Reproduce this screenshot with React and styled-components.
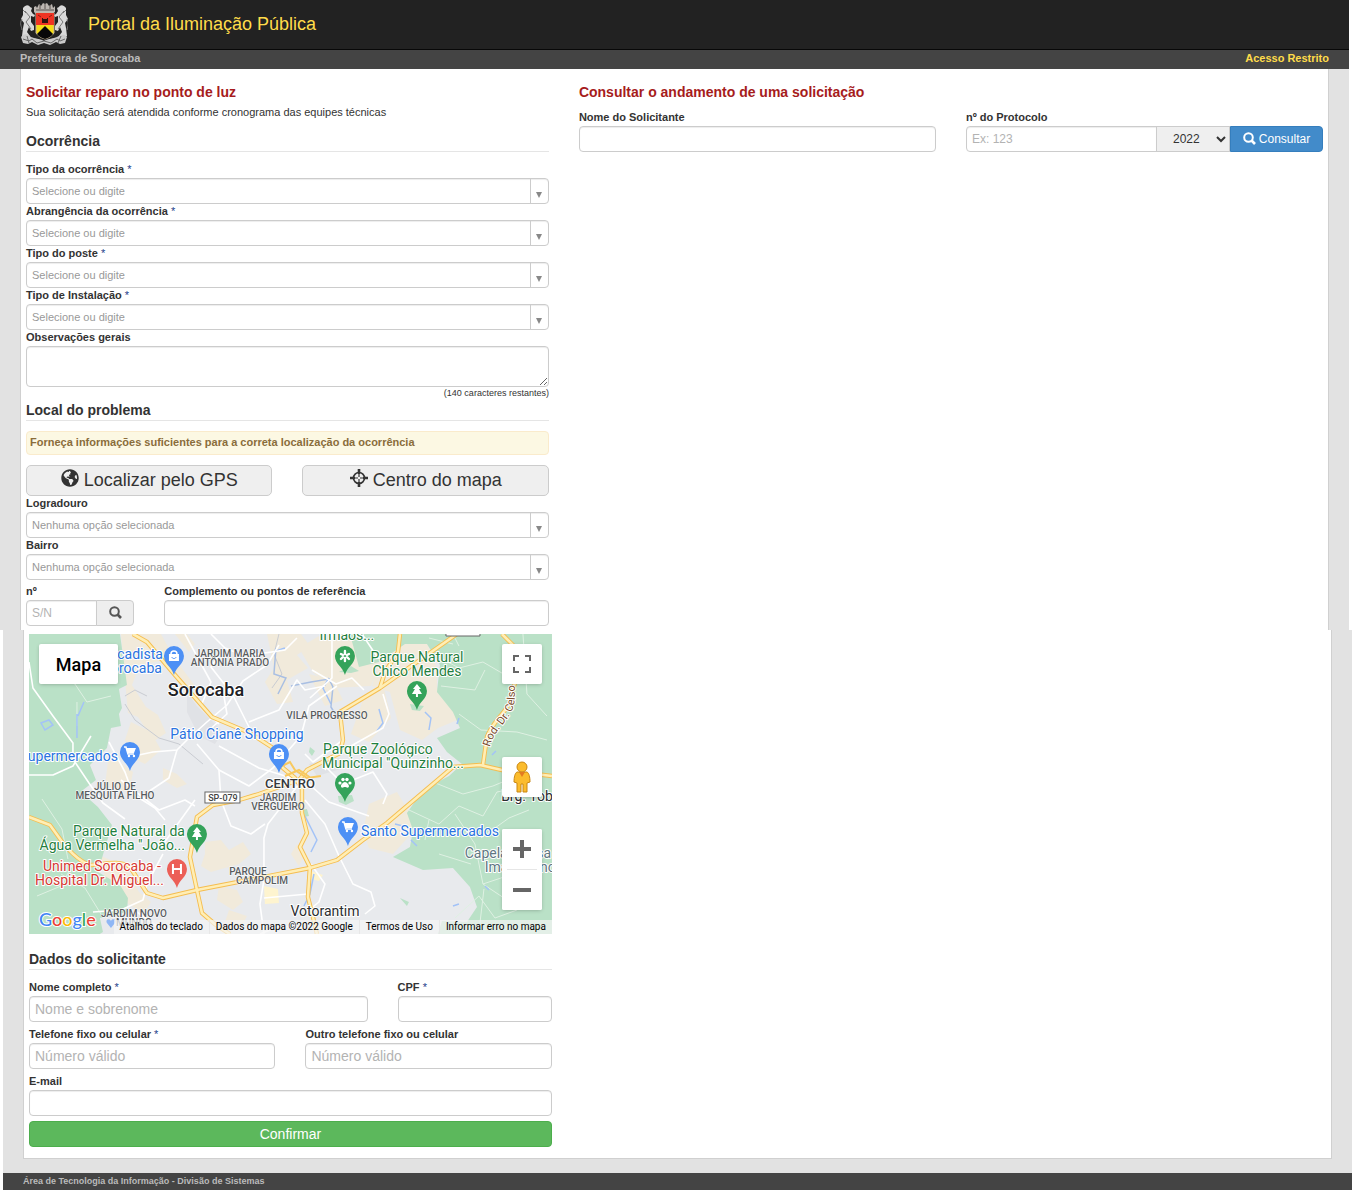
import { useState } from "react";
import styled, { createGlobalStyle } from "styled-components";
import { FaGlobeAmericas } from "react-icons/fa";

const GlobalStyle = createGlobalStyle`
  * {
    box-sizing: border-box;
  }
  body {
    margin: 0;
    background: #fff;
    color: #333;
    font-family: "Liberation Sans", Arial, sans-serif;
    font-size: 11px;
    line-height: 16px;
  }
  button, input, select, textarea {
    font-family: inherit;
    margin: 0;
  }
`;

const Navbar = styled.header`
  display: flex;
  align-items: center;
  gap: 20px;
  height: 50px;
  margin-right: 5px;
  padding: 0 20px 2px;
  background: #222;
  border-bottom: 1px solid #080808;
`;

const Brand = styled.a`
  color: #ffdc4a;
  font-size: 18px;
  line-height: 20px;
  text-decoration: none;
`;

const SubBar = styled.nav`
  display: flex;
  justify-content: space-between;
  margin-right: 5px;
  padding: 0 20px 3px;
  background: #444;
  color: #bbb;
  font-weight: bold;
  line-height: 16px;
`;

const RestrictedLink = styled.a`
  color: #ffdc4a;
  text-decoration: none;
`;

const Band = styled.div`
  margin: ${(props) => (props.$shifted ? "0 2px 0 3px" : "0 5px 0 0")};
  padding: ${(props) => (props.$shifted ? "0 20px 14px" : "0 20px")};
  background: #e2e2e2;
`;

const Sheet = styled.div`
  display: grid;
  grid-template-columns: repeat(12, minmax(0, 1fr));
  column-gap: 30px;
  padding: ${(props) => (props.$last ? "4px 5px 11px" : "13px 5px 4px")};
  background: #fff;
  border: solid #d0d0d0;
  border-width: ${(props) => (props.$last ? "0 1px 1px" : "0 1px")};
`;

const Column = styled.section`
  grid-column: span ${(props) => props.$span};
  min-width: 0;
`;

const Row = styled.div`
  display: grid;
  grid-template-columns: repeat(12, minmax(0, 1fr));
  column-gap: 30px;
  margin-top: ${(props) => props.$top || 0}px;
`;

const Cell = styled.div`
  grid-column: span ${(props) => props.$span};
  min-width: 0;
`;

const Title = styled.h1`
  margin: 0;
  color: #a61c1c;
  font-size: 14px;
  line-height: 20px;
`;

const Lead = styled.p`
  margin: 0 0 9px;
  line-height: 20px;
`;

const Legend = styled.h2`
  margin: ${(props) => props.$top || 0}px 0 10px;
  border-bottom: 1px solid #e5e5e5;
  font-size: 14px;
  line-height: 20px;
`;

const Label = styled.label`
  display: block;
  padding-bottom: 2px;
  font-weight: bold;
  line-height: 14px;
`;

const Required = styled.span`
  color: #23408a;
  font-weight: normal;
`;

const TextInput = styled.input`
  display: block;
  width: 100%;
  height: 26px;
  padding: 0 5px;
  background: #fff;
  border: 1px solid #ccc;
  border-radius: 4px;
  box-shadow: inset 0 1px 1px rgba(0, 0, 0, 0.075);
  font-size: ${(props) => (props.$large ? 14 : 12)}px;
  &::placeholder {
    color: #b3b3b3;
  }
`;

const TextArea = styled.textarea`
  display: block;
  width: 100%;
  height: 41px;
  padding: 4px 5px;
  border: 1px solid #ccc;
  border-radius: 4px;
  box-shadow: inset 0 1px 1px rgba(0, 0, 0, 0.075);
  font-size: 12px;
`;

const Counter = styled.p`
  margin: 0 0 1px;
  font-size: 9px;
  line-height: 12px;
  text-align: right;
`;

const ComboBox = styled.div`
  display: flex;
  height: 26px;
  border: 1px solid #ccc;
  border-radius: 4px;
  box-shadow: inset 0 1px 1px rgba(0, 0, 0, 0.075);
`;

const ComboInput = styled.input`
  flex: 1;
  min-width: 0;
  padding: 0 5px;
  background: none;
  border: 0;
  font-size: 11px;
  &::placeholder {
    color: #999;
  }
`;

const ComboToggle = styled.button`
  display: flex;
  align-items: flex-end;
  justify-content: center;
  width: 18px;
  padding: 0 0 5px;
  background: none;
  border: 0;
  border-left: 1px solid #ccc;
`;

const Caret = styled.span`
  border: 3px solid transparent;
  border-top: 6px solid #888;
  border-bottom: 0;
`;

const Notice = styled.p`
  margin: 0 0 10px;
  padding: 2px 3px 4px;
  background: #fcf8e3;
  border: 1px solid #faebcc;
  border-radius: 4px;
  color: #8a6d3b;
  font-weight: bold;
`;

const WideButton = styled.button`
  display: flex;
  align-items: center;
  justify-content: center;
  gap: 5px;
  width: 100%;
  height: 31px;
  padding: 0;
  background: #efefef;
  border: 1px solid #ccc;
  border-radius: 5px;
  color: #333;
  font-size: 18px;
  svg {
    margin-bottom: 5px;
  }
`;

const InputGroup = styled.div`
  display: flex;
  height: 26px;
`;

const GroupInput = styled(TextInput)`
  flex: 1;
  width: auto;
  min-width: 0;
  border-radius: 4px 0 0 4px;
`;

const YearSelect = styled.select`
  width: 74px;
  margin-left: -1px;
  padding: 0 0 0 12px;
  background: #efefef;
  border: 1px solid #ccc;
  border-radius: 0;
  color: #333;
  font-size: 12px;
`;

const GroupButton = styled.button`
  display: flex;
  align-items: center;
  justify-content: center;
  gap: 3px;
  width: ${(props) => (props.$primary ? 93 : 38)}px;
  padding: 0;
  margin-left: ${(props) => (props.$primary ? 0 : -1)}px;
  background: ${(props) => (props.$primary ? "#428bca" : "#eee")};
  border: 1px solid ${(props) => (props.$primary ? "#357ebd" : "#ccc")};
  border-radius: 0 4px 4px 0;
  color: ${(props) => (props.$primary ? "#fff" : "#555")};
  font-size: 12px;
`;

const Submit = styled.button`
  display: block;
  width: 100%;
  height: 26px;
  margin-top: 5px;
  padding: 0;
  background: #5cb85c;
  border: 1px solid #4cae4c;
  border-radius: 4px;
  color: #fff;
  font-size: 14px;
`;

const Footer = styled.footer`
  margin: 0 2px 2px 3px;
  padding: 0 20px 1px;
  background: #444;
  color: #bbb;
  font-size: 9px;
  font-weight: bold;
  line-height: 16px;
`;

const MapFrame = styled.div`
  position: relative;
  height: 300px;
  overflow: hidden;
  background: #e8eaed;
  font-family: Roboto, sans-serif;
`;

const MapDrawing = styled.svg`
  display: block;
  width: 100%;
  height: 100%;
`;

const MapButton = styled.button`
  display: flex;
  align-items: center;
  justify-content: center;
  width: ${(props) => props.$width || 40}px;
  height: 40px;
  padding: 0;
  background: #fff;
  border: 0;
  border-radius: 2px;
  box-shadow: ${(props) => (props.$flat ? "none" : "0 1px 4px -1px rgba(0, 0, 0, 0.3)")};
  color: #000;
  font-family: Roboto, sans-serif;
  font-size: 18px;
  font-weight: 500;
`;

const TopControls = styled.div`
  position: absolute;
  inset: 10px 10px auto;
  display: flex;
  justify-content: space-between;
`;

const SideControls = styled.div`
  position: absolute;
  right: 10px;
  bottom: 24px;
  display: flex;
  flex-direction: column;
  gap: 32px;
`;

const ZoomControls = styled.div`
  background: #fff;
  border-radius: 2px;
  box-shadow: 0 1px 4px -1px rgba(0, 0, 0, 0.3);
`;

const ZoomDivider = styled.hr`
  height: 1px;
  margin: 0 5px;
  background: #e6e6e6;
  border: 0;
`;

const Attribution = styled.div`
  position: absolute;
  right: 0;
  bottom: 0;
  display: flex;
  background: rgba(245, 245, 245, 0.7);
  font-size: 10px;
  line-height: 14px;
`;

const AttributionLink = styled.a`
  padding: 0 6px;
  color: #000;
  text-decoration: none;
  white-space: nowrap;
  & + & {
    border-left: 1px solid rgba(230, 230, 230, 0.9);
  }
`;

function Crest() {
  return (
    <svg width="48" height="44" viewBox="0 0 48 44" role="img" aria-label="Brasão de Sorocaba">
      <path d="M14 10V5l2-1 1 2 2-4 2 2 2-3 2 1 2-1 2 3 3-2 1 4 2-2v6l-3 2H16z" fill="#bdb7b2" />
      <path d="M16 8h18M20 3v4M25 2v5M30 3v4" stroke="#59524e" />
      <g fill="#d9d9d9">
        <path d="M3 6c3-4 6-3 7-1l2 1-1 3 2 3 2 1-1 2-3-1v6l3 4v4l-3 1-2-4-2 5 3 4-4 2-4-2 1-8 1-5-3-4 2-4z" />
        <path d="M2 17c-3 5 0 8 0 11M5 9l5 6-4 5 5 7M3 8l3 3" fill="none" stroke="#777" />
      </g>
      <g transform="matrix(-1 0 0 1 49 0)" fill="#d9d9d9">
        <path d="M3 6c3-4 6-3 7-1l2 1-1 3 2 3 2 1-1 2-3-1v6l3 4v4l-3 1-2-4-2 5 3 4-4 2-4-2 1-8 1-5-3-4 2-4z" />
        <path d="M2 17c-3 5 0 8 0 11M5 9l5 6-4 5 5 7M3 8l3 3" fill="none" stroke="#777" />
      </g>
      <path
        d="M1 35c4-5 8-2 10 0 4 2 8 1 13 4 5-3 9-2 13-4 3-2 7-4 10 0l-2 6-5 1-4-2-6 3-6-2-6 2-6-3-4 2-5-1z"
        fill="#c9c9c9"
      />
      <path d="M3 37l6 2 3-2 5 4 7-2 7 2 6-4 3 2 5-2M7 34l2 7M41 34l-3 7" fill="none" stroke="#666" />
      <path d="M16 11h18v20c-2 3-5 5-9 6-4-1-7-3-9-6z" fill="#f5dc17" stroke="#c8b8a0" />
      <path d="M16 11h18v12H16z" fill="#ee3424" />
      <path d="M25 24l8 8c-2 3-5 4-8 5-3-1-6-2-8-5z" fill="#080808" />
      <path d="M22 21v-5h1v1h4v-1h1v5z" fill="#30130f" />
      <path d="M18 13l3 2M32 13l-3 2" stroke="#8a1d14" />
    </svg>
  );
}

function SearchIcon() {
  return (
    <svg width="13" height="14" viewBox="0 0 13 14" fill="none" stroke="currentColor" strokeWidth="2">
      <circle cx="5.500" cy="5.500" r="4.300" />
      <path d="M8.500 8.500l3.500 3.500" strokeWidth="2.600" />
    </svg>
  );
}

function TargetIcon() {
  return (
    <svg width="18" height="18" viewBox="0 0 18 18" fill="none" stroke="currentColor">
      <circle cx="9" cy="9" r="5.500" strokeWidth="1.600" />
      <path d="M9 0v5M9 13v5M0 9h5M13 9h5" strokeWidth="2.600" />
      <path d="M9 5v3M9 10v3M5 9h3M10 9h3" strokeWidth="1.200" />
    </svg>
  );
}

function Pegman() {
  return (
    <svg width="20" height="32" viewBox="0 0 20 32">
      <path
        d="M5 11h10c2 1 3 5 3 10l-3 1v9H11v-8H9v8H5v-9l-3-1c0-5 1-9 3-10z"
        fill="#fbbc2d"
        stroke="#c98713"
      />
      <circle cx="10" cy="6" r="5" fill="#fbbc2d" stroke="#c98713" />
      <path d="M7 11h6l-3 5z" fill="#e37b22" />
    </svg>
  );
}

const tanAreas = [
  "M92 0h40l12 22 22 30-5 3-30-28-20 4-8 20 14 22 12 8 8 18-12 8-16-24-10-4z",
  "M102 88l20 10 10 18-16 14-12-6-8-18z",
  "M146 0h12l8 10-6 8z",
  "M238 0h34l9 12-13 9 11 13-21 12 6 22-16 2-12-22 9-14z",
  "M270 14l20-12 48 4 12 26-8 20-38 2-20-16z",
  "M350 26l28-22h18l12 30v20l20 14 3 17-22 9-16 12-22-10-10-38-18-6z",
  "M336 60l18-10 8 34-22 24-18-8z",
  "M80 120l24 18-4 20-24-6z",
  "M134 134l14 6 10 10-10 4-14-8z",
  "M72 222l24 10 14 26 12 10-8 12-20-14-18-22z",
  "M176 208l16-2 8 10 14-8 8 12-12 10-28 8-10-6 4-12z",
  "M190 252l18 4 6 12-10 8-16-10z",
  "M268 210l8 10-6 12-8-12z",
  "M340 170l28-12 12 20 4 20-20 22-24-6-6-16z",
  "M200 276l18 6-6 12-16-6z",
  "M280 40l24 6 10 20-18 6z",
];

const greenAreas = [
  "M0 0h91l4 28 3 23-8 4 3 19-3 6 2 12-10 2-4 20-17 17 6 15-13 10 6 9 9 8 14 18-7 23-7 24 22 13 8 13-1 14-27 6 3 14-11 7H0z",
  "M321 0h202v300H409l4-13 25 1 10-15-7-20-17-19-30 2-30-13 17-10 3-17-6-17 16-23 26-14 13-12-15-12-10-14 23-10-7-16-16-20 3-27-13-21h-22l-26 18-20 5z",
];

const whiteRoads = [
  "M0 28l4 26 20 28 20 27v16l16 24 14 20 22 16",
  "M0 141h24l20-9 18-30",
  "M101 134l4-12 19-4 24-2 10-10 20-18 20-17 16-24 24-16 12-20",
  "M182 0l14 14 20 8 40-6 12-12M194 15l-12 18 22 28 16 32",
  "M220 88l30-12 18-30 8 10 20-4",
  "M156 0l26 48-10 24 18 18M178 98l20-18-4-24",
  "M168 110l22 26 2 30 10 26 20 8 14-10",
  "M148 116l-8 28-24 16M80 108l16 30 8 22 22 14 10 12",
  "M92 146l38 30 26-10 10 6M130 216l36-50M134 220l-16 30-4 16-22 10-28 2",
  "M190 136l30 16 24-18 28-32 8-30 28-20",
  "M273 146l-34 44-4 14v42l-4 24 4 30",
  "M190 112l40 22 20 6 30 10 20 18 40 14",
  "M276 166l20 24 14 32 14 28 18 8 4 14-10 8",
  "M282 230l14 20-6 18-10 8M235 264l44-4",
  "M303 0v44l-22 20M283 36l24 14 16-6 12 12M333 0l16 24 10 2",
  "M354 60l6 20-6 14-32 18-20 14-6 10",
  "M314 106l-30 22-8-8M294 130l20 20 30-12 14 22-4 10",
  "M108 278l20 14 34 8M231 300l20-8 24 2",
];

const ruralRoads = [
  "M28 18l20-4 14 6 20-4M22 40l24 10 12 18 24-6M48 68v24",
  "M13 165l20 30 6 30M32 240l24 14 16 26M8 262l24-10 12-22",
  "M404 148l30 12 30-8 24-10 24 12M380 176l30 14 20-18 24 10 14-24 20-4",
  "M426 180l20 30 8 40 30 20M454 250l24-8 16-22M400 186l-4 20",
  "M455 255l-4 34M452 204l28-20 20-8M410 220l32 10",
  "M430 80l22 16 36 2 30 8M494 0l4 60 20 22M404 20l26 14 24-6 24 14M412 52l34 4 10-20",
  "M426 284l24-22 16 22 22-8M400 4l24 6M484 138l28 24M424 0l6 12",
];

const highways = [
  "M104 0l14 8 28 33 37 42 38 16 23 15 10 20 12 10 7 10v25l5 20-7 14 10 20-2 30 5 20 4 17",
  "M428 0l-77 54-40 24 3 28-3 13-33 17-8 10-40 14-20 6-26 5-16 12-7 40 7 33 5 23 14 12 14 9",
  "M371 0l-2 18-13 20-5 16",
  "M473 0l11 11 8 20-8 24c0 20-20 30-26 48l-4 28",
  "M523 142l-50-6-22-5-27 2-66 56-24 17-26 20-27 8-113 22-34 8-16-5-17-26c-10-8-30-2-40-2-12-4-24-18-27-22l-13-18-21-8",
];

const water = [
  "M12 89l8-3 4 5-8 5zM48 80v24M55 68l-6 14M244 18l12-4M300 44l-6 10 8 16",
  "M396 78l6 6-2 12M428 90l2-6M276 182l12 24-6 12M285 240l-4 20-6 12M382 206l6 6M424 272l6-2M456 252l4 4",
  "M366 190l8 2M463 121l4-4M350 75l4 14-6 8",
];

const labels = [
  { x: 134, y: 25, text: "cadista", kind: "shop", end: true },
  { x: 133, y: 39, text: "orocaba", kind: "shop", end: true },
  { x: 201, y: 23, text: "JARDIM MARIA", kind: "area" },
  { x: 201, y: 32, text: "ANTÔNIA PRADO", kind: "area" },
  { x: 177, y: 62, text: "Sorocaba", kind: "city" },
  { x: 318, y: 6, text: "Irmãos...", kind: "park" },
  { x: 388, y: 28, text: "Parque Natural", kind: "park" },
  { x: 388, y: 42, text: "Chico Mendes", kind: "park" },
  { x: 298, y: 85, text: "VILA PROGRESSO", kind: "area" },
  { x: 208, y: 105, text: "Pátio Cianê Shopping", kind: "shop" },
  { x: 89, y: 127, text: "upermercados", kind: "shop", end: true },
  { x: 349, y: 120, text: "Parque Zoológico", kind: "park" },
  { x: 364, y: 134, text: 'Municipal "Quinzinho...', kind: "park" },
  { x: 86, y: 156, text: "JÚLIO DE", kind: "area" },
  { x: 86, y: 165, text: "MESQUITA FILHO", kind: "area" },
  { x: 261, y: 154, text: "CENTRO", kind: "district" },
  { x: 249, y: 167, text: "JARDIM", kind: "area" },
  { x: 249, y: 176, text: "VERGUEIRO", kind: "area" },
  { x: 156, y: 202, text: "Parque Natural da", kind: "park", end: true },
  { x: 156, y: 216, text: 'Água Vermelha "João...', kind: "park", end: true },
  { x: 132, y: 237, text: "Unimed Sorocaba -", kind: "health", end: true },
  { x: 135, y: 251, text: "Hospital Dr. Miguel...", kind: "health", end: true },
  { x: 401, y: 202, text: "Santo Supermercados", kind: "shop" },
  { x: 219, y: 241, text: "PARQUE", kind: "area" },
  { x: 233, y: 250, text: "CAMPOLIM", kind: "area" },
  { x: 296, y: 282, text: "Votorantim", kind: "town" },
  { x: 105, y: 283, text: "JARDIM NOVO", kind: "area" },
  { x: 105, y: 292, text: "MUNDO", kind: "area" },
  { x: 479, y: 224, text: "Capela Nossa", kind: "place" },
  { x: 491, y: 238, text: "Imac. Conc", kind: "place" },
  { x: 498, y: 167, text: "Brg. Tob", kind: "town" },
];

const labelStyles = {
  shop: { fill: "#2a73e0", size: 14, weight: 400, halo: 2 },
  park: { fill: "#1f8040", size: 14, weight: 400, halo: 2 },
  health: { fill: "#d63a34", size: 14, weight: 400, halo: 2 },
  place: { fill: "#5f7782", size: 14, weight: 400, halo: 2 },
  area: { fill: "#585c60", size: 10, weight: 500, halo: 1 },
  district: { fill: "#35383b", size: 13, weight: 500, halo: 2 },
  city: { fill: "#202124", size: 18, weight: 500, halo: 2 },
  town: { fill: "#2b2d30", size: 14, weight: 400, halo: 2 },
};

const pins = [
  { x: 145, y: 22, color: "#4d90f5", icon: "bag" },
  { x: 316, y: 22, color: "#34a35a", icon: "flower" },
  { x: 388, y: 57, color: "#34a35a", icon: "tree" },
  { x: 250, y: 120, color: "#4d90f5", icon: "bag" },
  { x: 101, y: 118, color: "#4d90f5", icon: "cart" },
  { x: 316, y: 149, color: "#34a35a", icon: "paw" },
  { x: 319, y: 193, color: "#4d90f5", icon: "cart" },
  { x: 168, y: 200, color: "#34a35a", icon: "tree" },
  { x: 148, y: 235, color: "#ec5f57", icon: "hospital" },
];

const pinIcons = {
  bag: (
    <>
      <path d="M-5-2H5v7H-5z" fill="#fff" />
      <path d="M-3-2c0-4 6-4 6 0" fill="none" stroke="#fff" strokeWidth="1.5" />
      <path d="M-2 1c0 2 4 2 4 0" fill="none" stroke="#4d90f5" />
    </>
  ),
  cart: (
    <>
      <path d="M-6-5h2L-2 2h6" fill="none" stroke="#fff" strokeWidth="1.5" />
      <path d="M-4-4H6L4 1H-2z" fill="#fff" />
      <circle cx="-1" cy="4" r="1.2" fill="#fff" />
      <circle cx="4" cy="4" r="1.2" fill="#fff" />
    </>
  ),
  tree: <path d="M0-7L4-2H2L5 3H1v3h-2V3h-4l3-5h-2z" fill="#fff" />,
  paw: (
    <g fill="#fff">
      <circle cx="-5" cy="0" r="1.6" />
      <circle cx="-2" cy="-3.500" r="1.7" />
      <circle cx="2" cy="-3.500" r="1.7" />
      <circle cx="5" cy="0" r="1.6" />
      <path d="M0-1c2 0 4 3 4 4 0 3-3 1-4 1s-4 2-4-1c0-1 2-4 4-4z" />
    </g>
  ),
  flower: (
    <path
      d="M0-5v3M0 2v3M-4-2l2 1M4-2L2-1M-4 3l2-2M4 3L2 1"
      stroke="#fff"
      strokeWidth="2.4"
      strokeLinecap="round"
    />
  ),
  hospital: <path d="M-4-5v10M4-5v10M-4 0h8" stroke="#fff" strokeWidth="2" />,
};

function CityMap() {
  return (
    <MapDrawing viewBox="0 0 523 300" preserveAspectRatio="xMidYMid slice" role="img" aria-label="Mapa de Sorocaba">
      <rect width="523" height="300" fill="#e8eaed" />
      <g fill="#f1eadb">
        {tanAreas.map((d) => (
          <path key={d} d={d} />
        ))}
      </g>
      <path d="M235 252l14 3 1 14-14 1zM282 237l12 4-4 6-12-3z" fill="#fef4cf" />
      <path d="M158 58l10 14 26 26-8 12-16-8-12-24zM280 130l30-6 12 8-34 10z" fill="#e0e2e6" />
      <g fill="#bae1c7">
        {greenAreas.map((d) => (
          <path key={d} d={d} />
        ))}
        <path d="M310 38l12-6 8 5-8 2zM381 70l14 2-4 5-8-1zM281 113l5 4-3 5-3-4zM309 162l14-1 2 6-8 4-7-3zM371 264l9 4-2 4zM273 176l5-1 2 7-5 1z" />
      </g>
      <path d="M118 62l-12-6-10 6M96 70l10 16 24 18 20 6 24 20M250 0l-5 20 8 20-10 14" fill="none" stroke="#c9ccd2" />
      <g fill="none" stroke="#dff1e3">
        {ruralRoads.map((d) => (
          <path key={d} d={d} />
        ))}
      </g>
      <g fill="none" stroke="#a3c3f7" strokeWidth="1.5">
        {water.map((d) => (
          <path key={d} d={d} />
        ))}
        <path d="M247 14l-2 26 12 4-8 16M262 52l20-4 18-3 4 8-2 20 6 10" stroke="#a9bfe3" />
      </g>
      <g fill="none" stroke="#fff" strokeWidth="1.600" strokeLinejoin="round">
        {whiteRoads.map((d) => (
          <path key={d} d={d} />
        ))}
      </g>
      <g fill="none" stroke="#f5bd4f" strokeWidth="4.400" strokeLinejoin="round">
        {highways.map((d) => (
          <path key={d} d={d} />
        ))}
      </g>
      <g fill="none" stroke="#ffeeb5" strokeWidth="2.600" strokeLinejoin="round">
        {highways.map((d) => (
          <path key={d} d={d} />
        ))}
      </g>
      <path d="M253 132l8-4 5 8 12 8 14-2M256 142l14-6 12 8" fill="none" stroke="#f8c95f" strokeWidth="2" />
      <path d="M417 0v2h34V0" fill="#fff" stroke="#666" />
      <rect x="176" y="158" width="35" height="11" fill="#fff" stroke="#666" />
      <text x="194" y="167" fontSize="9" fontWeight="500" fill="#444" textAnchor="middle">
        SP-079
      </text>
      <path id="road-name" d="M461 113c3-18 25-28 25-50V24" fill="none" />
      <text fontSize="11" fill="#7a4b2a" stroke="#fff" strokeWidth="2" paintOrder="stroke">
        <textPath href="#road-name">Rod. Dr. Celso C</textPath>
      </text>
      {labels.map((label) => {
        const look = labelStyles[label.kind];
        return (
          <text
            key={label.text + label.y}
            x={label.x}
            y={label.y}
            fill={look.fill}
            fontSize={look.size}
            fontWeight={look.weight}
            textAnchor={label.end ? "end" : "middle"}
            stroke="#fff"
            strokeWidth={look.halo}
            strokeLinejoin="round"
            paintOrder="stroke"
          >
            {label.text}
          </text>
        );
      })}
      {pins.map((pin) => (
        <g key={`${pin.x}-${pin.y}`} transform={`translate(${pin.x} ${pin.y})`}>
          <path d="M0 19C-2 11-10 8-10 0a10 10 0 0 1 20 0C10 8 2 11 0 19z" fill={pin.color} />
          {pinIcons[pin.icon]}
        </g>
      ))}
      <path d="M82 294l-4-5c-2-4 3-5 4-2 1-3 6-2 4 2z" fill="#8fb7f5" />
      <text
        x="10"
        y="292"
        fontFamily="Lato, sans-serif"
        fontSize="18"
        fontWeight="500"
        stroke="#fff"
        strokeWidth="2"
        paintOrder="stroke"
      >
        <tspan fill="#4285f4">G</tspan>
        <tspan fill="#ea4335">o</tspan>
        <tspan fill="#fbbc05">o</tspan>
        <tspan fill="#4285f4">g</tspan>
        <tspan fill="#34a853">l</tspan>
        <tspan fill="#ea4335">e</tspan>
      </text>
    </MapDrawing>
  );
}

function FieldLabel(props) {
  return (
    <Label htmlFor={props.id}>
      {props.text}
      {props.required && <Required> *</Required>}
    </Label>
  );
}

function ComboField(props) {
  return (
    <>
      <FieldLabel id={props.id} text={props.label} required={props.required} />
      <ComboBox>
        <ComboInput id={props.id} placeholder={props.placeholder} autoComplete="off" />
        <ComboToggle type="button" aria-label={props.label}>
          <Caret />
        </ComboToggle>
      </ComboBox>
    </>
  );
}

function TextField(props) {
  return (
    <Cell $span={props.span}>
      <FieldLabel id={props.id} text={props.label} required={props.required} />
      <TextInput id={props.id} type={props.type || "text"} placeholder={props.placeholder} $large={props.large} />
    </Cell>
  );
}

function App() {
  const [year, setYear] = useState("2022");

  return (
    <>
      <GlobalStyle />
      <Navbar>
        <Crest />
        <Brand href="#">Portal da Iluminação Pública</Brand>
      </Navbar>
      <SubBar>
        <span>Prefeitura de Sorocaba</span>
        <RestrictedLink href="#">Acesso Restrito</RestrictedLink>
      </SubBar>

      <Band>
        <Sheet>
          <Column $span={5}>
            <Title>Solicitar reparo no ponto de luz</Title>
            <Lead>Sua solicitação será atendida conforme cronograma das equipes técnicas</Lead>

            <Legend>Ocorrência</Legend>
            <ComboField id="tipo" label="Tipo da ocorrência" placeholder="Selecione ou digite" required />
            <ComboField id="abrangencia" label="Abrangência da ocorrência" placeholder="Selecione ou digite" required />
            <ComboField id="poste" label="Tipo do poste" placeholder="Selecione ou digite" required />
            <ComboField id="instalacao" label="Tipo de Instalação" placeholder="Selecione ou digite" required />
            <FieldLabel id="observacoes" text="Observações gerais" />
            <TextArea id="observacoes" maxLength={140} />
            <Counter>(140 caracteres restantes)</Counter>

            <Legend>Local do problema</Legend>
            <Notice>Forneça informações suficientes para a correta localização da ocorrência</Notice>
            <Row>
              <Cell $span={6}>
                <WideButton type="button">
                  <FaGlobeAmericas />
                  Localizar pelo GPS
                </WideButton>
              </Cell>
              <Cell $span={6}>
                <WideButton type="button">
                  <TargetIcon />
                  Centro do mapa
                </WideButton>
              </Cell>
            </Row>
            <ComboField id="logradouro" label="Logradouro" placeholder="Nenhuma opção selecionada" />
            <ComboField id="bairro" label="Bairro" placeholder="Nenhuma opção selecionada" />
            <Row $top={4}>
              <Cell $span={3}>
                <FieldLabel id="numero" text="nº" />
                <InputGroup>
                  <GroupInput id="numero" placeholder="S/N" />
                  <GroupButton type="button" aria-label="Buscar">
                    <SearchIcon />
                  </GroupButton>
                </InputGroup>
              </Cell>
              <TextField span={9} id="complemento" label="Complemento ou pontos de referência" />
            </Row>
          </Column>

          <Column $span={7}>
            <Title as="h2">Consultar o andamento de uma solicitação</Title>
            <Row $top={8}>
              <TextField span={6} id="nome-solicitante" label="Nome do Solicitante" />
              <Cell $span={6}>
                <FieldLabel id="protocolo" text="nº do Protocolo" />
                <InputGroup>
                  <GroupInput id="protocolo" placeholder="Ex: 123" />
                  <YearSelect aria-label="Ano" value={year} onChange={(e) => setYear(e.target.value)}>
                    <option>2022</option>
                    <option>2021</option>
                    <option>2020</option>
                  </YearSelect>
                  <GroupButton type="button" $primary>
                    <SearchIcon />
                    Consultar
                  </GroupButton>
                </InputGroup>
              </Cell>
            </Row>
          </Column>
        </Sheet>
      </Band>

      <Band $shifted>
        <Sheet $last>
          <Column $span={5}>
            <MapFrame>
              <CityMap />
              <TopControls>
                <MapButton type="button" $width={79}>
                  Mapa
                </MapButton>
                <MapButton type="button" aria-label="Tela cheia">
                  <svg width="18" height="18" fill="none" stroke="#666" strokeWidth="2">
                    <path d="M1 6V1h5M12 1h5v5M17 12v5h-5M6 17H1v-5" />
                  </svg>
                </MapButton>
              </TopControls>
              <SideControls>
                <MapButton type="button" aria-label="Street View">
                  <Pegman />
                </MapButton>
                <ZoomControls>
                  <MapButton type="button" aria-label="Aumentar o zoom" $flat>
                    <svg width="18" height="18" stroke="#666" strokeWidth="4">
                      <path d="M9 0v18M0 9h18" />
                    </svg>
                  </MapButton>
                  <ZoomDivider />
                  <MapButton type="button" aria-label="Diminuir o zoom" $flat>
                    <svg width="18" height="18" stroke="#666" strokeWidth="4">
                      <path d="M0 9h18" />
                    </svg>
                  </MapButton>
                </ZoomControls>
              </SideControls>
              <Attribution>
                <AttributionLink href="#">Atalhos do teclado</AttributionLink>
                <AttributionLink href="#">Dados do mapa ©2022 Google</AttributionLink>
                <AttributionLink href="#">Termos de Uso</AttributionLink>
                <AttributionLink href="#">Informar erro no mapa</AttributionLink>
              </Attribution>
            </MapFrame>

            <Legend $top={15}>Dados do solicitante</Legend>
            <Row>
              <TextField span={8} id="nome" label="Nome completo" placeholder="Nome e sobrenome" required large />
              <TextField span={4} id="cpf" label="CPF" required large />
            </Row>
            <Row $top={5}>
              <TextField span={6} id="fone" label="Telefone fixo ou celular" placeholder="Número válido" type="tel" required large />
              <TextField span={6} id="fone2" label="Outro telefone fixo ou celular" placeholder="Número válido" type="tel" large />
            </Row>
            <Row $top={5}>
              <TextField span={12} id="email" label="E-mail" type="email" large />
            </Row>
            <Submit type="button">Confirmar</Submit>
          </Column>
        </Sheet>
      </Band>
      <Footer>Área de Tecnologia da Informação - Divisão de Sistemas</Footer>
    </>
  );
}

export default App;
